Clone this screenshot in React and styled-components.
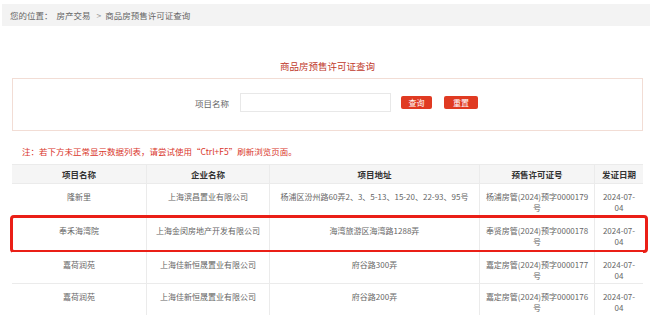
import React from 'react';
import styled, { createGlobalStyle } from 'styled-components';

const GlobalStyle = createGlobalStyle`
  html, body {
    margin: 0;
    padding: 0;
    background: #ffffff;
    overflow: hidden;
  }
  body {
    width: 660px;
    height: 315px;
    font-family: "Noto Sans CJK SC", "Noto Sans", sans-serif;
    color: #666;
  }
`;

const Page = styled.div`
  width: 660px;
`;

const Breadcrumb = styled.div`
  margin: 4px 10px 0 2px;
  height: 22px;
  line-height: 22px;
  padding-left: 8px;
  background: #f3f3f3;
  font-size: 8.5px;
  color: #666;
`;

const Crumb = styled.span`
  margin-right: ${p => p.$gap || 0}px;
  color: ${p => (p.$muted ? '#999' : '#666')};
`;

const Main = styled.div`
  margin: 0 17px 0 12px;
`;

const Title = styled.div`
  padding: 35px 0 6px;
  line-height: 11px;
  text-align: center;
  font-size: 9.5px;
  color: #c0392b;
`;

const SearchBox = styled.div`
  border: 1px solid #f2ddd5;
  height: 51px;
  box-sizing: content-box;
  display: flex;
  justify-content: center;
  align-items: flex-start;
  padding-left: 18px;
`;

const SearchRow = styled.div`
  margin-top: 14px;
  display: flex;
  align-items: center;
  height: 19px;
`;

const Label = styled.span`
  font-size: 8.5px;
  color: #666;
  margin-right: 11px;
`;

const Input = styled.div`
  width: 149px;
  height: 17px;
  border: 1px solid #e8e8e8;
  background: #fff;
  margin-right: 10px;
`;

const Button = styled.button`
  height: 13px;
  width: ${p => p.$w}px;
  margin-right: ${p => p.$gap || 0}px;
  border: none;
  border-radius: 2px;
  padding: 0;
  background: #e03a22;
  color: #fff;
  font-family: inherit;
  font-size: 8px;
  line-height: 13px;
`;

const Notice = styled.div`
  margin: 14px 0 7px;
  padding-left: 10px;
  line-height: 12px;
  font-size: 8.5px;
  color: #d9362b;
`;

const cols = '135px 123px 210px 115px 48px';

const Table = styled.div`
  border-top: 1px solid #ebebeb;
`;

const Row = styled.div`
  position: relative;
  display: grid;
  grid-template-columns: ${cols};
  border-bottom: 1px solid #ebebeb;
  background: ${p => (p.$head ? '#f5f5f5' : '#fff')};

  ${p => p.$highlight && `
    &::after {
      content: '';
      position: absolute;
      top: -1px;
      bottom: -2px;
      left: -2px;
      right: -5px;
      border: 3px solid #ea1f17;
      border-radius: 4px;
      pointer-events: none;
    }
  `}
`;

const Cell = styled.div`
  padding: ${p => (p.$head ? '4px 3px 3px' : `${p.$top}px 5px ${p.$bottom}px`)};
  line-height: 11px;
  font-size: ${p => (p.$head ? '8.5px' : '8px')};
  font-weight: ${p => (p.$head ? 700 : 400)};
  color: ${p => (p.$head ? '#333' : '#666')};
  text-align: center;
  border-right: 1px solid #ebebeb;
  &:last-child {
    border-right: none;
  }
`;

const headers = ['项目名称', '企业名称', '项目地址', '预售许可证号', '发证日期'];

const rows = [
  {
    name: '隆新里',
    company: '上海滨昌置业有限公司',
    address: '杨浦区汾州路60弄2、3、5-13、15-20、22-93、95号',
    permit: '杨浦房管(2024)预字0000179',
    date: '2024-07-04',
  },
  {
    name: '奉禾海湾院',
    company: '上海金闵房地产开发有限公司',
    address: '海湾旅游区海湾路1288弄',
    permit: '奉贤房管(2024)预字0000178',
    date: '2024-07-04',
    highlight: true,
  },
  {
    name: '嘉荷润苑',
    company: '上海佳新恒晟置业有限公司',
    address: '府谷路300弄',
    permit: '嘉定房管(2024)预字0000177',
    date: '2024-07-04',
  },
  {
    name: '嘉荷润苑',
    company: '上海佳新恒晟置业有限公司',
    address: '府谷路200弄',
    permit: '嘉定房管(2024)预字0000176',
    date: '2024-07-04',
  },
];

const App = () => {
  return (
    <Page>
      <GlobalStyle />
      <Breadcrumb>
        <Crumb $gap={4}>您的位置：</Crumb>
        <Crumb $gap={6}>房产交易</Crumb>
        <Crumb $muted $gap={4}>&gt;</Crumb>
        <Crumb>商品房预售许可证查询</Crumb>
      </Breadcrumb>
      <Main>
        <Title>商品房预售许可证查询</Title>
        <SearchBox>
          <SearchRow>
            <Label>项目名称</Label>
            <Input />
            <Button $w={31} $gap={12}>查询</Button>
            <Button $w={34}>重置</Button>
          </SearchRow>
        </SearchBox>
        <Notice>注：若下方未正常显示数据列表，请尝试使用“Ctrl+F5”刷新浏览页面。</Notice>
        <Table>
          <Row $head>
            {headers.map(h => (
              <Cell $head key={h}>{h}</Cell>
            ))}
          </Row>
          {rows.map((r, i) => {
            const top = r.highlight ? 9 : 7;
            const bottom = r.highlight ? 4 : 2;
            return (
              <Row key={i} $highlight={r.highlight}>
                <Cell $top={top} $bottom={bottom}>{r.name}</Cell>
                <Cell $top={top} $bottom={bottom}>{r.company}</Cell>
                <Cell $top={top} $bottom={bottom}>{r.address}</Cell>
                <Cell $top={top} $bottom={bottom}>{r.permit}<br />号</Cell>
                <Cell $top={top} $bottom={bottom}>
                  {r.date.slice(0, 8)}
                  <br />
                  {r.date.slice(8)}
                </Cell>
              </Row>
            );
          })}
        </Table>
      </Main>
    </Page>
  );
};

export default App;
